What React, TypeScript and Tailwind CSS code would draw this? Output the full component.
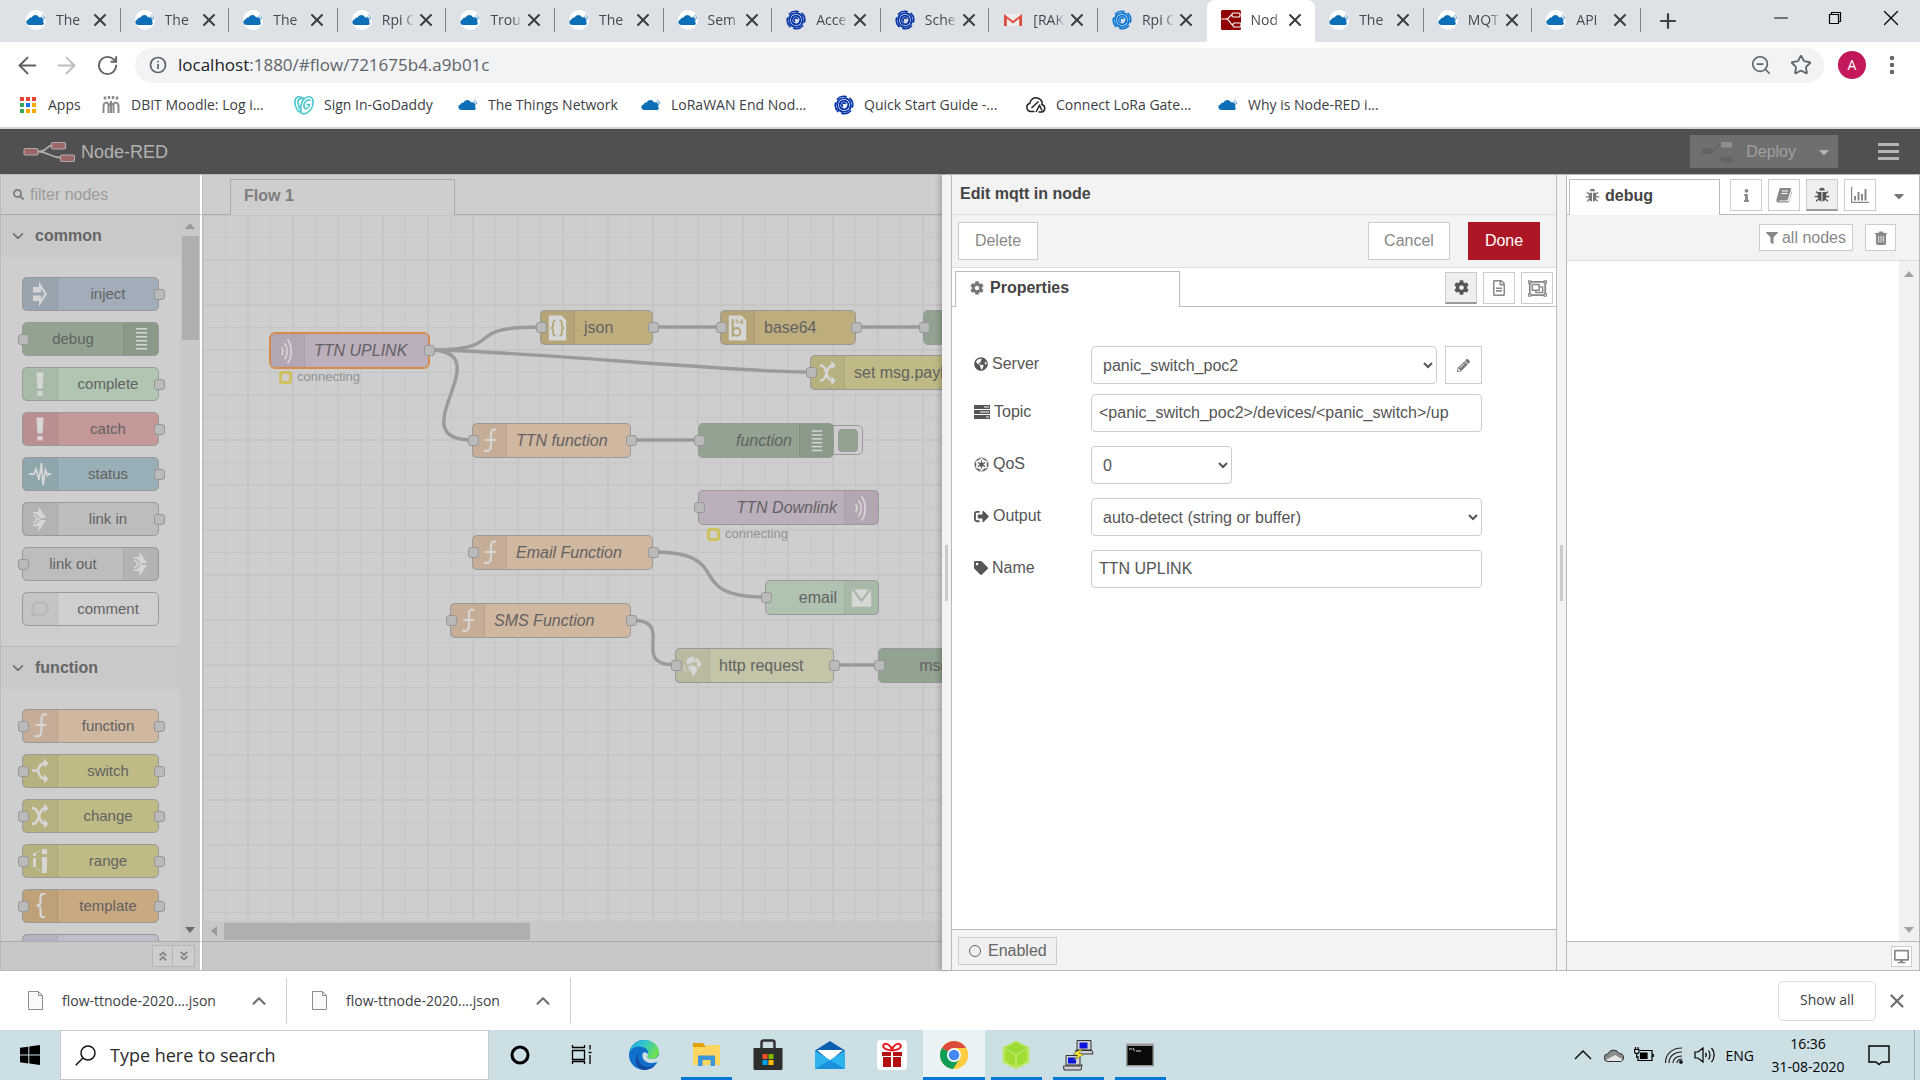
import type { ReactNode } from "react";
import {
  FaAngleDoubleDown,
  FaAngleDoubleUp,
  FaCaretDown,
  FaCog,
  FaDesktop,
  FaEmpire,
  FaFilter,
  FaGlobeAmericas,
  FaInfo,
  FaPencilAlt,
  FaRegComment,
  FaRegFileAlt,
  FaRegObjectGroup,
  FaSearch,
  FaSignOutAlt,
  FaTag,
} from "react-icons/fa";
import { ArrowLeft, ArrowRight, ChevronDown, ChevronUp, Minus, MoreVertical, Plus, RotateCw, Star, X, ZoomOut } from "lucide-react";

/* ---------- favicons ---------- */

function Cloud({ color = "#0d6fb8" }: { color?: string }) {
  return (
    <svg viewBox="0 0 20 20" className="size-5">
      <path
        d="M3 15a2.800 2.800 0 0 1-.6-5.500A3 3 0 0 1 5.500 7.500 4.200 4.200 0 0 1 13 7.300 3.600 3.600 0 0 1 17.200 12 2 2 0 0 1 16.500 15z"
        fill={color}
      />
      <path d="M15 6.500a3.500 3.500 0 0 1 2.500 3.500M16.200 4.800A5 5 0 0 1 19 9" fill="none" stroke={color} strokeWidth="0.9" opacity="0.7" />
    </svg>
  );
}

function CloudBadge() {
  return (
    <span className="flex size-5 items-center justify-center rounded-full bg-white">
      <Cloud />
    </span>
  );
}

function Swirl({ color = "#0a37a8" }: { color?: string }) {
  return (
    <svg viewBox="0 0 20 20" className="size-5" fill="none" stroke={color} strokeWidth="1.700" strokeLinecap="round">
      <path d="M8.500 11.500a2 2 0 1 1 3-3" />
      {[0, 90, 180, 270].map((a) => (
        <g key={a} transform={`rotate(${a} 10 10)`}>
          <path d="M6 9C6.500 6 9.500 4.500 13 6.500" />
          <path d="M3 9C3.500 4.500 8.500 2 13.500 4" />
          <path d="M3.500 4C6 1.200 9 .8 12 1.600" />
        </g>
      ))}
    </svg>
  );
}

function Gmail() {
  return (
    <svg viewBox="0 0 20 20" className="size-5">
      <path d="M1 4h18v12H1z" fill="#f0ecec" />
      <path d="M1 16V4l9 7 9-7v12h-2.800V8.500L10 13.400 3.800 8.500V16z" fill="#dd4b3e" />
    </svg>
  );
}

function RedFavicon() {
  return (
    <svg viewBox="0 0 20 20" className="size-5">
      <rect width="20" height="20" rx="1.500" fill="#8f0000" />
      <g fill="none" stroke="#fff" strokeWidth="1.200">
        <rect x="11" y="3" width="8" height="4" rx="1.200" />
        <rect x="12" y="13" width="8" height="4" rx="1.200" />
        <path d="M0 9h5c4 0 3-4 6-4M5 9c4 0 4 6 7 6" />
      </g>
    </svg>
  );
}

const TABS: { title: string; icon: ReactNode; active?: boolean }[] = [
  { title: "The", icon: <CloudBadge /> },
  { title: "The", icon: <CloudBadge /> },
  { title: "The", icon: <CloudBadge /> },
  { title: "Rpi C", icon: <CloudBadge /> },
  { title: "Trou", icon: <CloudBadge /> },
  { title: "The", icon: <CloudBadge /> },
  { title: "Sem", icon: <CloudBadge /> },
  { title: "Acce", icon: <Swirl /> },
  { title: "Sche", icon: <Swirl /> },
  { title: "[RAK", icon: <Gmail /> },
  { title: "Rpi C", icon: <Swirl color="#0f78d4" /> },
  { title: "Nod", icon: <RedFavicon />, active: true },
  { title: "The", icon: <CloudBadge /> },
  { title: "MQT", icon: <CloudBadge /> },
  { title: "API", icon: <CloudBadge /> },
];

function TabStrip() {
  return (
    <div className="flex h-[42px] shrink-0 items-stretch bg-[#dee1e6] pl-3">
      <div className="flex w-[1629px] shrink">
        {TABS.map((tab, i) => (
          <div
            key={i}
            className={
              tab.active
                ? "flex min-w-0 flex-1 items-center rounded-t-lg bg-white pb-0.5 pl-[14px]"
                : "flex min-w-0 flex-1 items-center pb-0.5 pl-[14px]"
            }
          >
            <span className="size-5 shrink-0">{tab.icon}</span>
            <span className="ml-2.5 w-8 shrink-0 overflow-hidden text-[14px] leading-5 whitespace-nowrap text-[#45494d] [mask-image:linear-gradient(to_right,black_70%,transparent)]">
              {tab.title}
            </span>
            <button aria-label="Close tab" className="ml-0.5 text-[#3c4043]">
              <X size={20} strokeWidth={2.5} />
            </button>
            {!tab.active && TABS[i + 1]?.active !== true && <span className="ml-auto h-6 w-px bg-[#808387]" />}
          </div>
        ))}
      </div>
      <button aria-label="New tab" className="ml-[15px] text-[#3c4043]">
        <Plus size={24} strokeWidth={2.2} />
      </button>
      <div className="ml-auto flex items-center gap-[33px] pr-4 pb-1.5 text-black">
        <button aria-label="Minimize">
          <Minus size={22} strokeWidth={1.2} />
        </button>
        <button aria-label="Restore">
          <svg viewBox="0 0 20 20" className="size-5" fill="none" stroke="currentColor" strokeWidth="1.200">
            <path d="M4.500 6.500h9v9h-9zM6.500 6.500v-2h9v9h-2" />
          </svg>
        </button>
        <button aria-label="Close">
          <X size={26} strokeWidth={1.2} />
        </button>
      </div>
    </div>
  );
}

function AddressBar() {
  return (
    <div className="flex h-[46px] shrink-0 items-center bg-white pr-4 pl-3.5 text-[#5f6368]">
      <button aria-label="Back">
        <ArrowLeft size={27} strokeWidth={1.800} />
      </button>
      <button aria-label="Forward" className="ml-3 text-[#bcbec0]">
        <ArrowRight size={27} strokeWidth={1.800} />
      </button>
      <button aria-label="Reload" className="ml-4">
        <RotateCw size={23} strokeWidth={2} />
      </button>
      <div className="ml-4 flex h-[35px] flex-1 items-center rounded-full bg-[#f1f3f4] pr-3 pl-[14px]">
        <svg viewBox="0 0 18 18" className="size-[18px]" fill="none" stroke="currentColor" strokeWidth="1.700">
          <circle cx="9" cy="9" r="7.500" />
          <path d="M9 8v5M9 5v1.600" />
        </svg>
        <div className="ml-[11px] flex-1 text-[17px] leading-6">
          <span className="text-[#202124]">localhost</span>:1880/#flow/721675b4.a9b01c
        </div>
        <ZoomOut size={22} strokeWidth={1.800} />
        <Star size={22} className="ml-[18px]" />
      </div>
      <span className="ml-3.5 flex size-7 items-center justify-center rounded-full bg-[#c2185b] text-sm text-white">A</span>
      <button aria-label="Menu" className="ml-3.5">
        <MoreVertical size={24} strokeWidth={2.500} />
      </button>
    </div>
  );
}

const APP_DOTS = ["#ea4335", "#ea4335", "#ea4335", "#34a853", "#1a73e8", "#fbab00", "#34a853", "#fbab00", "#fbab00"];

function Bookmark({ icon, label, width }: { icon: ReactNode; label: string; width: string }) {
  return (
    <a href="#" className={`flex shrink-0 items-center gap-2.5 ${width}`}>
      <span className="size-5 shrink-0">{icon}</span>
      <span className="whitespace-nowrap">{label}</span>
    </a>
  );
}

function Bookmarks() {
  return (
    <nav className="flex h-[41px] shrink-0 items-center overflow-hidden border-b-2 border-[#d6d7d9] bg-white pb-1.5 pl-[18px] text-[14px] leading-5 text-[#3c4043]">
      <Bookmark
        width="w-[83px]"
        label="Apps"
        icon={
          <svg viewBox="0 0 20 20" className="size-5">
            {APP_DOTS.map((c, i) => (
              <rect key={i} x={2 + (i % 3) * 6} y={2 + Math.floor(i / 3) * 6} width="4" height="4" fill={c} />
            ))}
          </svg>
        }
      />
      <Bookmark
        width="w-[193px]"
        label="DBIT Moodle: Log i..."
        icon={
          <svg viewBox="0 0 20 20" className="size-5" fill="none" stroke="#8a8a8a" strokeWidth="2">
            <path d="M2.500 18v-6.500c0-5 5-5 5-1V18M7.500 11c1-3 5-3 5 0v7M12.500 10.500c0-4 5-4 5 1V18M10 6v12" />
            <path d="M4 1.500v3M8 1v3M12 1v3M16 1.500v3" strokeWidth="2.400" />
          </svg>
        }
      />
      <Bookmark
        width="w-[164px]"
        label="Sign In-GoDaddy"
        icon={
          <svg viewBox="0 0 20 20" className="size-5" fill="none" stroke="#4cc7cd" strokeWidth="1.700">
            <path d="M10 4C6 0 .5 1.500.9 8c.5 6 4 9.500 9.100 11 5.100-1.500 8.600-5 9.100-11C19.500 1.500 14 0 10 4c-3 3.500-4 8-3 13.500" />
            <path d="M10 4C7 2 3.500 4 4 8c.4 3.500 1.800 6 3.500 8M16.500 5.500C13 3 9.500 8 10 11.500c.4 4 5 2 5.500-2h-3" />
          </svg>
        }
      />
      <Bookmark width="w-[183px]" label="The Things Network" icon={<Cloud />} />
      <Bookmark width="w-[193px]" label="LoRaWAN End Nod..." icon={<Cloud />} />
      <Bookmark width="w-[192px]" label="Quick Start Guide -..." icon={<Swirl />} />
      <Bookmark
        width="w-[192px]"
        label="Connect LoRa Gate..."
        icon={
          <svg viewBox="0 0 20 20" className="size-5" fill="none" stroke="#222" strokeWidth="1.500">
            <path d="M8.500 16.500H5a4.200 4.200 0 0 1-1.200-8.200C4.500 4 8.500 2 12 3.200c3 1 4.500 3.500 4 6.300 4 1.500 3.500 7-.5 7.500h-3" />
            <path d="M5.500 13l7-6.500M10 17l4-7.500M13.500 10.500l2.500 5" />
          </svg>
        }
      />
      <Bookmark width="w-[180px]" label="Why is Node-RED i..." icon={<Cloud />} />
    </nav>
  );
}

/* ---------- editor header ---------- */

function EditorHeader() {
  return (
    <header className="flex h-[45px] shrink-0 items-center bg-[#505050] pr-[21px] pl-[23px]">
      <svg viewBox="0 0 52 22" className="h-[22px] w-[52px]" fill="#9d6666" stroke="#b0abab" strokeWidth="1.200">
        <path d="M15 10.500c10 0 8-6 14-6M15 10.500c10 0 12 6 22 6" fill="none" strokeWidth="1.800" />
        <rect x="1" y="7.500" width="14" height="6.500" rx="1.500" />
        <rect x="28.500" y="1.500" width="14" height="6.500" rx="1.500" />
        <rect x="37.500" y="14" width="14" height="6.500" rx="1.500" />
      </svg>
      <h1 className="ml-1.5 text-[18px] leading-6 text-[#b3b3b3]">Node-RED</h1>
      <div className="ml-auto flex h-[33px] bg-[#6f6f6f] text-[#a0a0a0]">
        <button className="flex items-center pl-3">
          <svg viewBox="0 0 30 22" className="h-[22px] w-[30px]">
            <path d="M10 9c6 0 4-6 9-6" fill="none" stroke="#666" strokeWidth="1.500" />
            <path d="M0 7h11v6H0zM19 16h11v5.500H19z" fill="#636363" />
            <path d="M19 1h11v5.500H19z" fill="#8e8e8e" />
          </svg>
          <span className="ml-3.5 text-[16px]">Deploy</span>
        </button>
        <button aria-label="Deploy options" className="pr-1.5 pl-5 text-[#b0b0b0]">
          <FaCaretDown size={16} />
        </button>
      </div>
      <button aria-label="Main menu" className="ml-10 flex flex-col gap-1">
        <span className="h-[3px] w-[21px] bg-[#b4b4b4]" />
        <span className="h-[3px] w-[21px] bg-[#b4b4b4]" />
        <span className="h-[3px] w-[21px] bg-[#b4b4b4]" />
      </button>
    </header>
  );
}

/* ---------- node glyphs, drawn in a 34px cell ---------- */

function Cell({ children }: { children: ReactNode }) {
  return (
    <svg viewBox="0 0 34 34" className="size-[34px]" fill="#d6d6d6">
      {children}
    </svg>
  );
}

const GLYPHS: Record<string, ReactNode> = {
  inject: (
    <Cell>
      <path d="M10 10h6V4.500L24 17l-8 12.500V24h-6v-5.500h8v4L21.500 17 18 11.500v4h-8z" />
    </Cell>
  ),
  debug: (
    <Cell>
      {[6, 10, 14, 18, 22, 26].map((y) => (
        <rect key={y} x="12" y={y} width="11" height="1.500" />
      ))}
    </Cell>
  ),
  bang: (
    <Cell>
      <path d="M13.500 5.500h7l-1 16h-5zM14.500 24h5v4.500h-5z" />
    </Cell>
  ),
  status: (
    <Cell>
      <path
        d="M6 17h5l2-5 3 11 2.500-17L20 28l2.500-15 2 5 .5-1h3"
        fill="none"
        stroke="#d6d6d6"
        strokeWidth="1.800"
      />
    </Cell>
  ),
  link: (
    <Cell>
      <path d="M10 10h5.500V4.500l7.500 11.500h-6.500a7 7 0 0 0-6.500-4.500zM10 24h5.500v5.500L23 18h-6.500a7 7 0 0 1-6.500 4.500z" />
      <path d="M10 13.500a3.500 3.500 0 0 1 0 7M13.500 17h4" fill="none" stroke="#d6d6d6" strokeWidth="1.500" />
    </Cell>
  ),
  comment: (
    <span className="flex size-[34px] items-center justify-center text-[#b5b5b5]">
      <FaRegComment size={18} />
    </span>
  ),
  function: (
    <Cell>
      <path
        d="M24 6c-4-2-5.500 0-5.500 4v11c0 5-2.500 8-7 5.500M12.500 16h11"
        fill="none"
        stroke="#d6d6d6"
        strokeWidth="2.200"
      />
    </Cell>
  ),
  switch: (
    <Cell>
      <path d="M9 16.500h6M23 9c-5 0-7 3-8 7.500 1 5 3 8.500 8 8.500" fill="none" stroke="#d6d6d6" strokeWidth="2.500" />
      <path d="M21 4.500l4.500 5-4.500 4zM21 20l4.500 5-4.500 4.500z" />
    </Cell>
  ),
  change: (
    <Cell>
      <path d="M9 9c9 0 5 16 14 16M9 25c9 0 5-16 14-16" fill="none" stroke="#d6d6d6" strokeWidth="2.500" />
      <path d="M21 4.500l4.500 5-4.500 4zM21 20l4.500 5-4.500 4.500z" />
    </Cell>
  ),
  range: (
    <Cell>
      <path d="M10 9h3v3h-3zM10 14h3v9h-3zM19 5h5v5h-5zM19 13h5v16h-5z" />
      <path d="M13 9l5-3M13 24l6 4" stroke="#d6d6d6" strokeDasharray="2 1" />
    </Cell>
  ),
  template: (
    <Cell>
      <path
        d="M22 5h-2c-2 0-2.500 1-2.500 3v5c0 2-1.500 3.500-4 3.500 2.500 0 4 1.500 4 3.500v5c0 2 .5 3 2.500 3h2"
        fill="none"
        stroke="#d6d6d6"
        strokeWidth="2.200"
      />
    </Cell>
  ),
  wave: (
    <Cell>
      <path
        d="M11 13c1.500 2.500 1.500 6 0 8.500M14 9c3.500 5 3.500 11.500 0 16.500M17 5c5 7 5 18 0 25"
        fill="none"
        stroke="#d6d6d6"
        strokeWidth="1.800"
      />
    </Cell>
  ),
  json: (
    <Cell>
      <path d="M8 4h13l5 5v21H8z" />
      <path
        d="M15 9c-2 0-2.500 1-2.500 4s0 4-2.500 4c2.500 0 2.500 1 2.500 4s.5 4 2.500 4M19 9c2 0 2.500 1 2.500 4s0 4 2.500 4c-2.500 0-2.500 1-2.500 4s-.5 4-2.500 4"
        fill="none"
        stroke="#b3a372"
        strokeWidth="1.700"
      />
    </Cell>
  ),
  base64: (
    <Cell>
      <path d="M8 4h13l5 5v21H8z" />
      <path d="M12 8v18M12 21a4 4 0 1 1 8 0 4 4 0 1 1-8 0" fill="none" stroke="#b3a372" strokeWidth="2" />
      <path d="M17 7c-2 1-2 5 0 5s1.500-3-.5-2.500M22 13V8l-2.500 3.500H23" fill="none" stroke="#b3a372" strokeWidth="1" />
    </Cell>
  ),
  mail: (
    <Cell>
      <path d="M7 8h20v18H7z" />
      <path d="M8 8l9 12 9-12" fill="none" stroke="#a8b9a8" strokeWidth="2.200" />
    </Cell>
  ),
  globe: (
    <Cell>
      <path d="M11 10.500c2-2.500 5-3.500 8-3l-1 2.500 2 1-2 3-3-.5-1 2-3-1zM20 8c3 1.500 5.500 4 6 7.500l-2 3-2.500-2 .5-3-2.500-1zM13 17l5-.5 4 2.500-1 4-2.500 4-1 .5-2-4.500-2.500-2.500zM8 15.500l1.500 4 1 4C8.500 21.500 7.500 18.500 8 15.500z" />
    </Cell>
  ),
};

/* ---------- palette ---------- */

type PaletteEntry = { label: string; glyph: string; color: string; side?: "right"; inPort?: boolean; outPort?: boolean };

const COMMON: PaletteEntry[] = [
  { label: "inject", glyph: "inject", color: "bg-[#a2adb9]", outPort: true },
  { label: "debug", glyph: "debug", color: "bg-[#92a391]", side: "right", inPort: true },
  { label: "complete", glyph: "bang", color: "bg-[#b0c6b1]", outPort: true },
  { label: "catch", glyph: "bang", color: "bg-[#c39897]", outPort: true },
  { label: "status", glyph: "status", color: "bg-[#98afb7]", outPort: true },
  { label: "link in", glyph: "link", color: "bg-[#bdbdbd]", outPort: true },
  { label: "link out", glyph: "link", color: "bg-[#bdbdbd]", side: "right", inPort: true },
  { label: "comment", glyph: "comment", color: "bg-[#cfcfcf]" },
];

const FUNCTIONS: PaletteEntry[] = [
  { label: "function", glyph: "function", color: "bg-[#d0b7a0]", inPort: true, outPort: true },
  { label: "switch", glyph: "switch", color: "bg-[#c0bb86]", inPort: true, outPort: true },
  { label: "change", glyph: "change", color: "bg-[#c0bb86]", inPort: true, outPort: true },
  { label: "range", glyph: "range", color: "bg-[#c0bb86]", inPort: true, outPort: true },
  { label: "template", glyph: "template", color: "bg-[#c9a980]", inPort: true, outPort: true },
  { label: "", glyph: "", color: "bg-[#c0bdca]" },
];

function Ports({ left, right }: { left?: boolean; right?: boolean }) {
  return (
    <>
      {left && <span className="absolute top-[11px] -left-[5px] size-[11px] rounded-[3px] border border-[#979797] bg-[#bababa]" />}
      {right && <span className="absolute top-[11px] -right-[7px] size-[11px] rounded-[3px] border border-[#979797] bg-[#bababa]" />}
    </>
  );
}

function PaletteNode({ label, glyph, color, side, inPort, outPort }: PaletteEntry) {
  return (
    <li
      className={`relative flex h-[34px] w-[137px] rounded-[5px] border border-[#999] ${color} ${side === "right" ? "flex-row-reverse" : ""}`}
    >
      <span
        className={
          side === "right"
            ? "flex w-[35px] items-center justify-center border-l border-black/5 bg-black/5"
            : "flex w-[35px] items-center justify-center border-r border-black/5 bg-black/5"
        }
      >
        {GLYPHS[glyph]}
      </span>
      <span className="flex-1 text-center text-[15px] leading-8 text-[#626262]">{label}</span>
      <Ports left={inPort} right={outPort} />
    </li>
  );
}

function PaletteSection({ title, entries }: { title: string; entries: PaletteEntry[] }) {
  return (
    <section>
      <h2 className="flex h-[42px] items-center bg-[#c9c9c9] pl-2 text-[16px] font-bold text-[#656565]">
        <ChevronDown size={18} strokeWidth={2} className="mr-2" />
        {title}
      </h2>
      <ul className="flex flex-col gap-[11px] border-b border-[#bbb] py-5 pl-[21px]">
        {entries.map((e, i) => (
          <PaletteNode key={i} {...e} />
        ))}
      </ul>
    </section>
  );
}

function Arrow({ className }: { className: string }) {
  return (
    <svg viewBox="0 0 10 6" className={`h-1.5 w-2.5 ${className}`}>
      <path d="M0 6l5-6 5 6z" fill="currentColor" />
    </svg>
  );
}

function Palette() {
  return (
    <aside className="flex w-[203px] shrink-0 flex-col border-r border-l border-[#bbb] bg-[#cecece]">
      <div className="flex h-10 shrink-0 items-center gap-1.5 border-r-2 border-b border-[#ababab] border-r-white pl-3 text-[#8a8a8a]">
        <FaSearch size={11} className="shrink-0 text-[#7b7b7b]" />
        <input
          aria-label="Filter nodes"
          placeholder="filter nodes"
          className="min-w-0 flex-1 bg-transparent text-[16px] leading-6 outline-none placeholder:text-[#9c9c9c]"
        />
      </div>
      <div className="flex min-h-0 flex-1 border-r-2 border-white">
        <div className="min-h-0 flex-1 overflow-hidden">
          <PaletteSection title="common" entries={COMMON} />
          <PaletteSection title="function" entries={FUNCTIONS} />
        </div>
        <div className="flex w-5 flex-col items-center bg-[#c8c8c8] py-2">
          <Arrow className="text-[#999]" />
          <span className="mt-[7px] h-[104px] w-[17px] bg-[#afafaf]" />
          <Arrow className="mt-auto rotate-180 text-[#6b6b6b]" />
        </div>
      </div>
      <div className="flex h-[29px] shrink-0 items-center justify-end border-t border-r-2 border-t-[#ababab] border-r-white bg-[#c8c8c8] pr-[5px] text-[#868686]">
        <button aria-label="Collapse all" className="flex h-[22px] w-[21px] items-center justify-center border border-[#b4b4b4] bg-[#cecece]">
          <FaAngleDoubleUp size={12} />
        </button>
        <button aria-label="Expand all" className="flex h-[22px] w-[22px] items-center justify-center border border-l-0 border-[#b4b4b4] bg-[#cecece]">
          <FaAngleDoubleDown size={12} />
        </button>
      </div>
    </aside>
  );
}

/* ---------- workspace ---------- */

type FlowNodeData = {
  label: string;
  glyph: string;
  color: string;
  left: number;
  top: number;
  width: number;
  side?: "right";
  inPort?: boolean;
  outPort?: boolean;
  italic?: boolean;
  selected?: boolean;
};

const FLOW: FlowNodeData[] = [
  { label: "TTN UPLINK", glyph: "wave", color: "bg-[#bbafbc]", left: 67, top: 118, width: 159, outPort: true, italic: true, selected: true },
  { label: "json", glyph: "json", color: "bg-[#bfae7d]", left: 337, top: 95, width: 113, inPort: true, outPort: true },
  { label: "base64", glyph: "base64", color: "bg-[#bfae7d]", left: 517, top: 95, width: 136, inPort: true, outPort: true },
  { label: "", glyph: "debug", color: "bg-[#92a391]", left: 720, top: 95, width: 160, side: "right", inPort: true },
  { label: "set msg.payload", glyph: "change", color: "bg-[#c0bb86]", left: 607, top: 140, width: 180, inPort: true, outPort: true },
  { label: "TTN function", glyph: "function", color: "bg-[#d0b7a0]", left: 269, top: 208, width: 159, inPort: true, outPort: true, italic: true },
  { label: "function", glyph: "debug", color: "bg-[#92a391]", left: 495, top: 208, width: 136, side: "right", inPort: true, italic: true },
  { label: "TTN Downlink", glyph: "wave", color: "bg-[#bbafbc]", left: 495, top: 275, width: 181, side: "right", inPort: true, italic: true },
  { label: "Email Function", glyph: "function", color: "bg-[#d0b7a0]", left: 269, top: 320, width: 181, inPort: true, outPort: true, italic: true },
  { label: "email", glyph: "mail", color: "bg-[#b0c3b0]", left: 562, top: 365, width: 114, side: "right", inPort: true },
  { label: "SMS Function", glyph: "function", color: "bg-[#d0b7a0]", left: 247, top: 388, width: 181, inPort: true, outPort: true, italic: true },
  { label: "http request", glyph: "globe", color: "bg-[#c3c4a8]", left: 472, top: 433, width: 159, inPort: true, outPort: true },
  { label: "msg.payload", glyph: "debug", color: "bg-[#92a391]", left: 675, top: 433, width: 174, side: "right", inPort: true },
];

const WIRES = [
  "M226 135C310 135 253 112 337 112",
  "M226 135C310 135 523 157 607 157",
  "M226 135C301 135 194 225 269 225",
  "M450 112H517",
  "M653 112H720",
  "M428 225H495",
  "M450 337C534 337 478 382 562 382",
  "M428 405C475 405 425 450 472 450",
  "M631 450H675",
];

function FlowNode(n: FlowNodeData) {
  const row = n.side === "right" ? "flex-row-reverse" : "";
  const border = n.selected ? "border-[#d68b4c] outline outline-[#d68b4c]" : "border-[#999]";
  return (
    <div
      className={`absolute flex h-[35px] rounded-[5px] border ${border} ${n.color} ${row}`}
      style={{ left: n.left, top: n.top, width: n.width }}
    >
      <span
        className={
          n.side === "right"
            ? "flex w-[34px] shrink-0 items-center border-l border-black/5 bg-black/5"
            : "flex w-[34px] shrink-0 items-center border-r border-black/5 bg-black/5"
        }
      >
        {GLYPHS[n.glyph]}
      </span>
      <span
        className={`flex-1 pr-[7px] pl-[9px] text-[16px] leading-[33px] whitespace-nowrap text-[#626262] ${n.italic ? "italic" : ""} ${n.side ? "text-right" : ""}`}
      >
        {n.label}
      </span>
      <Ports left={n.inPort} right={n.outPort} />
    </div>
  );
}

function NodeStatus({ className }: { className: string }) {
  return (
    <div className={`absolute flex items-center gap-[5px] text-[13px] leading-4 text-[#919191] ${className}`}>
      <span className="size-[13px] rounded-[3px] border-[3px] border-[#cfc05f]" />
      connecting
    </div>
  );
}

function Workspace() {
  return (
    <main className="flex min-w-0 flex-1 flex-col overflow-hidden bg-[#cecece]">
      <div className="flex h-10 shrink-0 items-end border-b border-[#ababab] pl-[27px]">
        <div className="-mb-px h-9 w-[225px] border border-b-0 border-[#ababab] bg-[#cecece] pl-[13px] text-[16px] leading-8 font-bold text-[#7d7d7d]">
          Flow 1
        </div>
      </div>
      <div className="relative min-h-0 flex-1 overflow-hidden">
        <svg className="absolute size-full">
          <defs>
            <pattern id="grid" width="45" height="45" patternUnits="userSpaceOnUse">
              <path d="M22.500 0V45M0 22.500H45" stroke="#c6c6c6" strokeWidth="1" />
              <path d="M0 0V45M0 0H45M45 0V45M0 45H45" stroke="#c6c6c6" strokeWidth="2" />
            </pattern>
          </defs>
          <rect width="100%" height="100%" fill="url(#grid)" />
          {WIRES.map((d) => (
            <path key={d} d={d} fill="none" stroke="#9a9a9a" strokeWidth="3.400" />
          ))}
        </svg>
        <button
          aria-label="Toggle debug output"
          className="absolute top-[210px] left-[625px] flex h-[30px] w-[35px] items-center justify-end rounded-[5px] border border-[#999] bg-[#cecece] pr-1"
        >
          <span className="h-[23px] w-5 rounded-[4px] border border-[#999] bg-[#92a391]" />
        </button>
        {FLOW.map((n) => (
          <FlowNode key={n.left + "-" + n.top} {...n} />
        ))}
        <NodeStatus className="top-[154px] left-[76px]" />
        <NodeStatus className="top-[311px] left-[504px]" />
      </div>
      <div className="flex h-5 shrink-0 items-center bg-[#c8c8c8] pl-1.5">
        <Arrow className="-rotate-90 text-[#999]" />
        <span className="ml-[5px] h-[17px] w-[306px] bg-[#afafaf]" />
      </div>
      <div className="h-[29px] shrink-0 border-t border-[#ababab] bg-[#c8c8c8]" />
    </main>
  );
}

/* ---------- edit tray ---------- */

function Grip() {
  return (
    <div className="flex w-[9px] shrink-0 items-center justify-center bg-[#f3f3f3]">
      <span className="h-14 w-[3px] bg-[#ccc]" />
    </div>
  );
}

function TopicIcon() {
  return (
    <svg viewBox="0 0 16 14" className="h-3.5 w-4" fill="#555">
      <path d="M0 0h16v4H0zM0 5h16v4H0zM0 10h16v4H0z" />
      <path d="M10 1.500h5v1h-5zM6 6.500h9v1H6zM12 11.500h3v1h-3z" fill="#fff" />
    </svg>
  );
}

function Row({ id, label, icon, children }: { id: string; label: string; icon: ReactNode; children: ReactNode }) {
  return (
    <div className="flex h-[38px] items-center">
      <label htmlFor={id} className="flex w-[117px] items-center gap-1 pb-0.5">
        {icon}
        {label}
      </label>
      {children}
    </div>
  );
}

const FIELD = "h-[38px] rounded-[4px] border border-[#ccc] bg-white text-[16px] text-[#555]";
const TOOL = "flex h-8 w-8 items-center justify-center border border-[#ccc] bg-white text-[#888]";
const TOOL_ON = "flex h-8 w-8 items-center justify-center border border-b-2 border-[#ccc] border-b-[#999] bg-[#efefef] text-[#555]";

function EditTray() {
  return (
    <>
      <div className="z-10 flex shadow-[-3px_0_5px_rgba(0,0,0,0.18)]">
        <Grip />
      </div>
      <section className="flex w-[606px] shrink-0 flex-col border-r border-l border-[#bbb] bg-white">
        <h2 className="h-10 shrink-0 border-b border-[#ddd] bg-[#f3f3f3] pl-2 text-[16px] leading-[38px] font-bold text-[#444]">
          Edit mqtt in node
        </h2>
        <div className="flex h-[53px] shrink-0 items-center border-b border-[#ddd] bg-[#f3f3f3] pr-4 pl-1.5 text-[16px]">
          <button className="h-[38px] w-20 border border-[#ccc] bg-white text-[#888]">Delete</button>
          <button className="ml-auto h-[38px] w-[82px] border border-[#ccc] bg-white text-[#888]">Cancel</button>
          <button className="ml-[18px] h-[38px] w-[72px] bg-[#ad1625] text-white">Done</button>
        </div>
        <div className="flex h-[39px] shrink-0 items-end border-b border-[#bbb] pl-[3px]">
          <div className="-mb-px flex h-9 w-[225px] items-center gap-1.5 border border-b-0 border-[#bbb] bg-white pb-1 pl-3.5 text-[16px] font-bold text-[#444]">
            <FaCog size={14} className="text-[#777]" />
            Properties
          </div>
          <div className="mr-[3px] mb-0.5 ml-auto flex gap-1.5">
            <button aria-label="Properties" className={TOOL_ON}>
              <FaCog size={15} />
            </button>
            <button aria-label="Description" className={TOOL}>
              <FaRegFileAlt size={16} />
            </button>
            <button aria-label="Appearance" className={TOOL}>
              <FaRegObjectGroup size={19} />
            </button>
          </div>
        </div>
        <form className="flex flex-1 flex-col gap-2.5 pt-[39px] pl-[22px] text-[16px] text-[#555]">
          <Row id="server" label="Server" icon={<FaGlobeAmericas size={14} />}>
            <select id="server" className={`${FIELD} w-[346px] px-[7px]`}>
              <option>panic_switch_poc2</option>
            </select>
            <button type="button" aria-label="Edit server" className="ml-2 flex h-[38px] w-[37px] items-center justify-center border border-[#ccc] text-[#777]">
              <FaPencilAlt size={13} />
            </button>
          </Row>
          <div className="flex flex-col gap-3.5">
            <Row id="topic" label="Topic" icon={<TopicIcon />}>
              <input id="topic" defaultValue="<panic_switch_poc2>/devices/<panic_switch>/up" className={`${FIELD} w-[391px] px-[7px]`} />
            </Row>
            <Row id="qos" label="QoS" icon={<FaEmpire size={15} />}>
              <select id="qos" className={`${FIELD} w-[141px] px-[7px]`}>
                <option>0</option>
              </select>
            </Row>
            <Row id="output" label="Output" icon={<FaSignOutAlt size={15} />}>
              <select id="output" className={`${FIELD} w-[391px] px-[7px]`}>
                <option>auto-detect (string or buffer)</option>
              </select>
            </Row>
            <Row id="name" label="Name" icon={<FaTag size={14} />}>
              <input id="name" defaultValue="TTN UPLINK" className={`${FIELD} w-[391px] px-[7px]`} />
            </Row>
          </div>
        </form>
        <div className="flex h-[41px] shrink-0 items-center border-t border-[#bbb] bg-[#f3f3f3] pt-0.5 pl-1.5">
          <button className="flex h-7 w-[99px] items-center gap-[7px] border border-[#ccc] bg-[#f0f0f0] pl-2.5 text-[16px] text-[#666]">
            <span className="size-3 rounded-full border border-[#666]" />
            Enabled
          </button>
        </div>
      </section>
    </>
  );
}

/* ---------- sidebar ---------- */

function Bug({ className }: { className: string }) {
  return (
    <svg viewBox="0 0 16 16" className={className} fill="currentColor">
      <path d="M5.200 3.500a2.800 2.800 0 0 1 5.600 0z" />
      <path d="M4 5h3.500v9.500C5.200 14.300 4 12.500 4 10zM8.500 5H12v5c0 2.500-1.200 4.300-3.500 4.500z" />
      <path d="M4 6.500L2 4.500M4 9.500H.8M4.500 12l-2.300 2.300M12 6.500l2-2M12 9.500h3.200M11.500 12l2.300 2.300" stroke="currentColor" strokeWidth="1.300" fill="none" />
    </svg>
  );
}

function Sidebar() {
  return (
    <aside className="flex w-[354px] shrink-0 flex-col border-x border-[#bbb] bg-white">
      <div className="flex h-10 shrink-0 items-end border-b border-[#bbb] pl-0.5">
        <div className="-mb-px flex h-9 w-[151px] items-center gap-[5px] border border-b-0 border-[#bbb] bg-white pb-1 pl-[15px] text-[16px] font-bold text-[#444]">
          <Bug className="size-[15px] text-[#777]" />
          debug
        </div>
        <div className="mb-[3px] ml-2.5 flex gap-1.5">
          <button aria-label="Info" className={TOOL}>
            <FaInfo size={13} />
          </button>
          <button aria-label="Help" className={TOOL}>
            <svg viewBox="0 0 16 16" className="size-4" fill="currentColor">
              <path d="M4.500 1H14c1 0 1.300.6 1 1.500L12 12c-.3 1-.8 1.500-1.800 1.500H3c-.6 0-.7.800 0 .8h8.500c1 0 1.500-.5 1.800-1.500L15.800 4c.4 1 .2 1.500 0 2l-2.500 8c-.3 1-1 1.500-2 1.500H2.500C.8 15.500 0 14 .5 12.500L3.300 2.500C3.500 1.500 3.800 1 4.500 1z" />
              <path d="M6 4h6M5.400 6.500h6" stroke="#fff" />
            </svg>
          </button>
          <button aria-label="Debug" className={TOOL_ON}>
            <Bug className="size-4" />
          </button>
          <button aria-label="Dashboard" className={TOOL}>
            <svg viewBox="0 0 18 16" className="h-4 w-[18px]" fill="currentColor">
              <path d="M0 0h1.200v14.800H18V16H0zM3 9h2v4.500H3zM6.500 5h2v8.500h-2zM10 7h2v6.500h-2zM13.500 2h2v11.500h-2z" />
            </svg>
          </button>
        </div>
        <button aria-label="More tabs" className="mr-3 mb-2.5 ml-auto text-[#777]">
          <FaCaretDown size={16} />
        </button>
      </div>
      <div className="flex h-[46px] shrink-0 items-center justify-end gap-3 border-b border-[#ddd] bg-[#f3f3f3] pr-[23px] text-[16px] text-[#888]">
        <button className="flex h-[27px] w-[94px] items-center justify-center gap-1 border border-[#ccc] bg-white">
          <FaFilter size={12} />
          all nodes
        </button>
        <button aria-label="Clear messages" className="flex h-[27px] w-[31px] items-center justify-center border border-[#ccc] bg-white">
          <svg viewBox="0 0 12 14" className="h-3.5 w-3" fill="currentColor">
            <path d="M0 2h3.500l.7-1.500h3.600L8.500 2H12v1.200h-1V12c0 1.200-.7 2-1.600 2H2.600C1.700 14 1 13.200 1 12V3.200H0z" />
            <path d="M3.700 5v6.500M6 5v6.500M8.300 5v6.500" stroke="#fff" strokeWidth="0.800" />
          </svg>
        </button>
      </div>
      <div className="flex min-h-0 flex-1 justify-end">
        <div className="flex w-5 flex-col items-center justify-between bg-[#f1f1f1] pt-2.5 pb-2 text-[#a3a3a3]">
          <Arrow className="" />
          <Arrow className="rotate-180" />
        </div>
      </div>
      <div className="flex h-[29px] shrink-0 items-center justify-end border-t border-[#bbb] bg-[#f3f3f3] pr-[7px]">
        <button aria-label="Open in new window" className="flex h-[21px] w-[21px] items-center justify-center border border-[#ccc] bg-white text-[#888]">
          <FaDesktop size={15} />
        </button>
      </div>
    </aside>
  );
}

/* ---------- download shelf ---------- */

function Download() {
  return (
    <div className="flex h-[45px] items-center border-r border-[#ccc] pr-4 pl-[25px]">
      <svg viewBox="0 0 15 19" className="h-[19px] w-[15px]">
        <path d="M.5.5h10l4 4v14H.5z" fill="#f8f9f9" stroke="#8d8d8d" />
        <path d="M10.500.5v4h4" fill="none" stroke="#8d8d8d" />
      </svg>
      <span className="ml-[19px] w-[180px] text-[14px] leading-5 text-[#3c4043]">flow-ttnode-2020....json</span>
      <button aria-label="Download options" className="ml-1.5 text-[#6b6e72]">
        <ChevronUp size={22} strokeWidth={2.300} />
      </button>
    </div>
  );
}

function Shelf() {
  return (
    <div className="flex h-[60px] shrink-0 items-center border-t border-[#bbb] bg-white pl-[3px]">
      <Download />
      <Download />
      <button className="ml-auto h-10 w-[98px] rounded-[5px] border border-[#dadce0] pb-0.5 text-[14px] font-medium text-[#3c4043]">
        Show all
      </button>
      <button aria-label="Close downloads" className="mr-3 ml-2.5 text-[#6b6e72]">
        <X size={22} strokeWidth={2.400} />
      </button>
    </div>
  );
}

/* ---------- taskbar ---------- */

const APPS: { name: string; state?: "open" | "active"; icon: ReactNode }[] = [
  {
    name: "Cortana",
    icon: <circle cx="16" cy="16" r="8" fill="none" stroke="#000" strokeWidth="3" />,
  },
  {
    name: "Task view",
    icon: (
      <path
        d="M6.500 11.500h12v9h-12zM6.500 6v2.500h12V6M6.500 25v-2.500h12V25M24 6v4.500M24 16v9M22.500 13.500h3"
        fill="none"
        stroke="#000"
        strokeWidth="1.300"
      />
    ),
  },
  {
    name: "Edge",
    icon: (
      <>
        <defs>
          <linearGradient id="edgeTop" x1="0" y1="0" x2="1" y2="0.400">
            <stop offset="0" stopColor="#1e9fe0" />
            <stop offset="0.500" stopColor="#31c6cb" />
            <stop offset="1" stopColor="#6ee055" />
          </linearGradient>
        </defs>
        <circle cx="16" cy="16" r="15" fill="#0f6fcb" />
        <path d="M1 15C2 6 9 1 16 1c9 0 15 6 15 12 0 4-3 7-7 7-4 0-5.500-1.500-4-3.500 2-6-4-9-9-9C6 7.500 2 11 1 15z" fill="url(#edgeTop)" />
        <path d="M12 13c-5 6 0 15 8 15 3 0 6-1.500 8.500-4-3 5-7.500 7-12.500 7C8 30 5 19 12 13z" fill="#0f4a9c" />
        <path d="M15 14c-2 3 .5 10 8 10 3 0 5-.5 7.500-2L32 20l-1-4c-2 3-4 4-7 4-4 0-5.500-1.500-4-3.500.5-2-3-4.500-5-2.500z" fill="#cbdfe5" />
      </>
    ),
  },
  {
    name: "File Explorer",
    state: "open",
    icon: (
      <>
        <path d="M3 4h10l2 3h14v6H3z" fill="#dfa000" />
        <path d="M3 8h12l2-2h13v20H3z" fill="#ffd560" />
        <path d="M8 27V16.500h17V27h-4.500v-6h-8v6z" fill="#3c96dc" />
      </>
    ),
  },
  {
    name: "Store",
    icon: (
      <>
        <path d="M9.500 10V3.500C9.500 2 10.500 1.500 11.500 1.500h9c1 0 2 .5 2 2V10" fill="none" stroke="#333" strokeWidth="2.500" />
        <path d="M1.500 9h29v20.500a1.500 1.500 0 0 1-1.500 1.500H3a1.500 1.500 0 0 1-1.500-1.500z" fill="#2e2e2e" />
        <path d="M10.500 15h5v5h-5z" fill="#f25022" />
        <path d="M16.500 15h5v5h-5z" fill="#7fba00" />
        <path d="M10.500 21h5v5h-5z" fill="#00a4ef" />
        <path d="M16.500 21h5v5h-5z" fill="#ffb900" />
      </>
    ),
  },
  {
    name: "Mail",
    icon: (
      <>
        <path d="M1 11.500L16 2l15 9.500V20H1z" fill="#0b5fae" />
        <path d="M3 11h26L16 22z" fill="#fff" />
        <path d="M1 11.500l15 9.500 15-9.500V30H1z" fill="#2fb3ee" />
        <path d="M1 30l15-9 15 9z" fill="#1a90dd" />
      </>
    ),
  },
  {
    name: "Gifts",
    icon: (
      <>
        <rect x="1" y="1" width="30" height="30" rx="4" fill="#fff" />
        <path d="M6 13h9v4H6zM17 13h9v4h-9zM7 18h8v10H7zM17 18h8v10h-8z" fill="#b30e12" />
        <path d="M16 11.500C11 11 6 9.500 7.500 6c2-3 7.500 0 8.500 5 1-5 6.500-8 8.500-5 1.500 3.500-3.500 5-8.500 5.500z" fill="none" stroke="#e01e24" strokeWidth="2" />
      </>
    ),
  },
  {
    name: "Chrome",
    state: "active",
    icon: (
      <>
        <circle cx="16" cy="16" r="14" fill="#ffcd41" />
        <path d="M16 16L3.900 9A14 14 0 0 1 28.100 9z" fill="#db4a3c" />
        <path d="M16 16L3.900 9A14 14 0 0 0 15 30l7-11z" fill="#109d58" />
        <path d="M16 9h12.100A14 14 0 0 1 16 30l6-11z" fill="#ffcd41" />
        <circle cx="16" cy="16" r="7" fill="#fff" />
        <circle cx="16" cy="16" r="5.300" fill="#4587f3" />
      </>
    ),
  },
  {
    name: "Cube",
    state: "open",
    icon: (
      <>
        <path d="M16 1.500l13.500 7v15L16 30.500l-13.500-7v-15z" fill="#b9e86a" />
        <path d="M16 3l11 6-11 6L5 9z" fill="#9bdb35" />
        <path d="M5 10.500l10 5.500v11.500L5 22z" fill="#a4dc33" />
        <path d="M27 10.500L17 16v11.500L27 22z" fill="#a0de34" />
      </>
    ),
  },
  {
    name: "Terminal client",
    state: "open",
    icon: (
      <>
        <g fill="#d0d0d0" stroke="#222" strokeWidth="0.900">
          <path d="M15 1.500h14V11H15zM13.500 11.500H30l1 3.500H15zM4 16.500h14V26H4zM1.500 27h16.500l2-1.500-1 5.500H2z" />
        </g>
        <path d="M17.500 3.500h8v6h-8zM6 18.500h8v6H6z" fill="#0a12e0" />
        <path d="M21 9l-10 6 5 1.500-5 5 11-6-5-1z" fill="#ffef12" stroke="#555" strokeWidth="0.500" />
      </>
    ),
  },
  {
    name: "Command prompt",
    state: "open",
    icon: (
      <>
        <path d="M2 4.500h28v23H2z" fill="#9a9a9a" />
        <path d="M3.500 7h25v19h-25z" fill="#0a0a0a" />
        <path d="M5 10h3M9 9l1.500 3M12 12h5" stroke="#ddd" strokeWidth="1" />
      </>
    ),
  },
];

function Taskbar() {
  return (
    <footer className="flex h-[50px] shrink-0 items-stretch bg-[#cbdfe5] text-black">
      <button aria-label="Start" className="flex w-[60px] items-center justify-center">
        <svg viewBox="0 0 20 20" className="size-5">
          <path d="M0 2.800L8.300 1.700v7.900H0zM9.300 1.500L20 0v9.600H9.300zM0 10.500h8.300v7.900L0 17.200zM9.300 10.500H20V20L9.300 18.500z" />
        </svg>
      </button>
      <label className="flex w-[429px] items-center gap-3.5 border border-[#c4c8ca] bg-white pl-3.5">
        <svg viewBox="0 0 21 21" className="size-[21px] shrink-0" fill="none" stroke="#111" strokeWidth="1.500">
          <circle cx="13" cy="8" r="7" />
          <path d="M8 13L.7 20.300" />
        </svg>
        <input
          aria-label="Search"
          placeholder="Type here to search"
          className="min-w-0 flex-1 text-[18px] leading-6 outline-none placeholder:text-[#2b2b2b]"
        />
      </label>
      <div className="flex">
        {APPS.map((app) => (
          <button
            key={app.name}
            aria-label={app.name}
            className={
              app.state === "active"
                ? "flex w-[62px] flex-col items-center bg-[#e9f2f4] pt-[9px]"
                : "flex w-[62px] flex-col items-center pt-[9px]"
            }
          >
            <svg viewBox="0 0 32 32" className="size-8">
              {app.icon}
            </svg>
            {app.state === "open" && <span className="mt-auto h-[3px] w-[51px] bg-[#0078d7]" />}
            {app.state === "active" && <span className="mt-auto h-[3px] w-full bg-[#0078d7]" />}
          </button>
        ))}
      </div>
      <div className="ml-auto flex items-center gap-2.5 pr-[5px] text-[14px]">
        <svg viewBox="0 0 18 10" className="mr-0.5 h-2.5 w-[18px]" fill="none" stroke="#111" strokeWidth="1.500">
          <path d="M1 9l8-8 8 8" />
        </svg>
        <svg viewBox="0 0 20 14" className="h-3.5 w-5">
          <path d="M4 13.500a3.800 3.800 0 0 1 0-7.600A6 6 0 0 1 15 5.500a4 4 0 0 1 1 8z" fill="#8b8b8b" stroke="#333" />
          <path d="M2 12l9-5 7 4c0 2-1 2-2 2H4z" fill="#e5e5e5" />
        </svg>
        <svg viewBox="0 0 20 16" className="h-4 w-5" fill="none" stroke="#000" strokeWidth="1.200">
          <path d="M6 3.500h12v10H4V9M19.300 7v3" />
          <path d="M6.500 6H13v5.500H6.500z" fill="#000" />
          <path d="M1.500 0v2M4 0v2M.5 2.500H5V5c0 2-4.500 2-4.500 0zM2.700 6v5" />
        </svg>
        <svg viewBox="0 0 20 20" className="size-5" fill="none" stroke="#222" strokeWidth="1.200">
          <path d="M1.500 18C1.500 9 8 3 18 3M5 18C5 11.500 10 7 18 7M9 18c0-4 3.500-7 9-7M13 18c0-2 2-4 5-4" />
          <circle cx="17" cy="17" r="1.300" fill="#000" />
        </svg>
        <svg viewBox="0 0 22 20" className="h-5 w-[22px]" fill="none" stroke="#000" strokeWidth="1.200">
          <path d="M1 7h3l5-4v14l-5-4H1zM11.500 8c1 1.200 1 2.800 0 4M14.500 5.500c2 2.500 2 6.500 0 9M17.500 3c3.500 4 3.500 10 0 14" />
        </svg>
        <span>ENG</span>
        <div className="ml-1 w-20 text-center leading-[23px]">
          <div>16:36</div>
          <div className="whitespace-nowrap">31-08-2020</div>
        </div>
        <svg viewBox="0 0 22 22" className="mr-3.5 ml-2.5 size-[22px]" fill="none" stroke="#000" strokeWidth="1.400">
          <path d="M1 2h20v16h-7l-3 2.500L8 18H1z" />
        </svg>
        <span className="h-full w-px bg-[#9fb2b9]" />
      </div>
    </footer>
  );
}

export default function App() {
  return (
    <div className="flex h-screen flex-col overflow-hidden font-['Open_Sans',sans-serif]">
      <TabStrip />
      <AddressBar />
      <Bookmarks />
      <div className="flex min-h-0 flex-1 flex-col font-['Liberation_Sans',Arial,sans-serif]">
        <EditorHeader />
        <div className="flex min-h-0 flex-1 border-t border-[#bbb]">
          <Palette />
          <Workspace />
          <EditTray />
          <Grip />
          <Sidebar />
        </div>
      </div>
      <Shelf />
      <Taskbar />
    </div>
  );
}
